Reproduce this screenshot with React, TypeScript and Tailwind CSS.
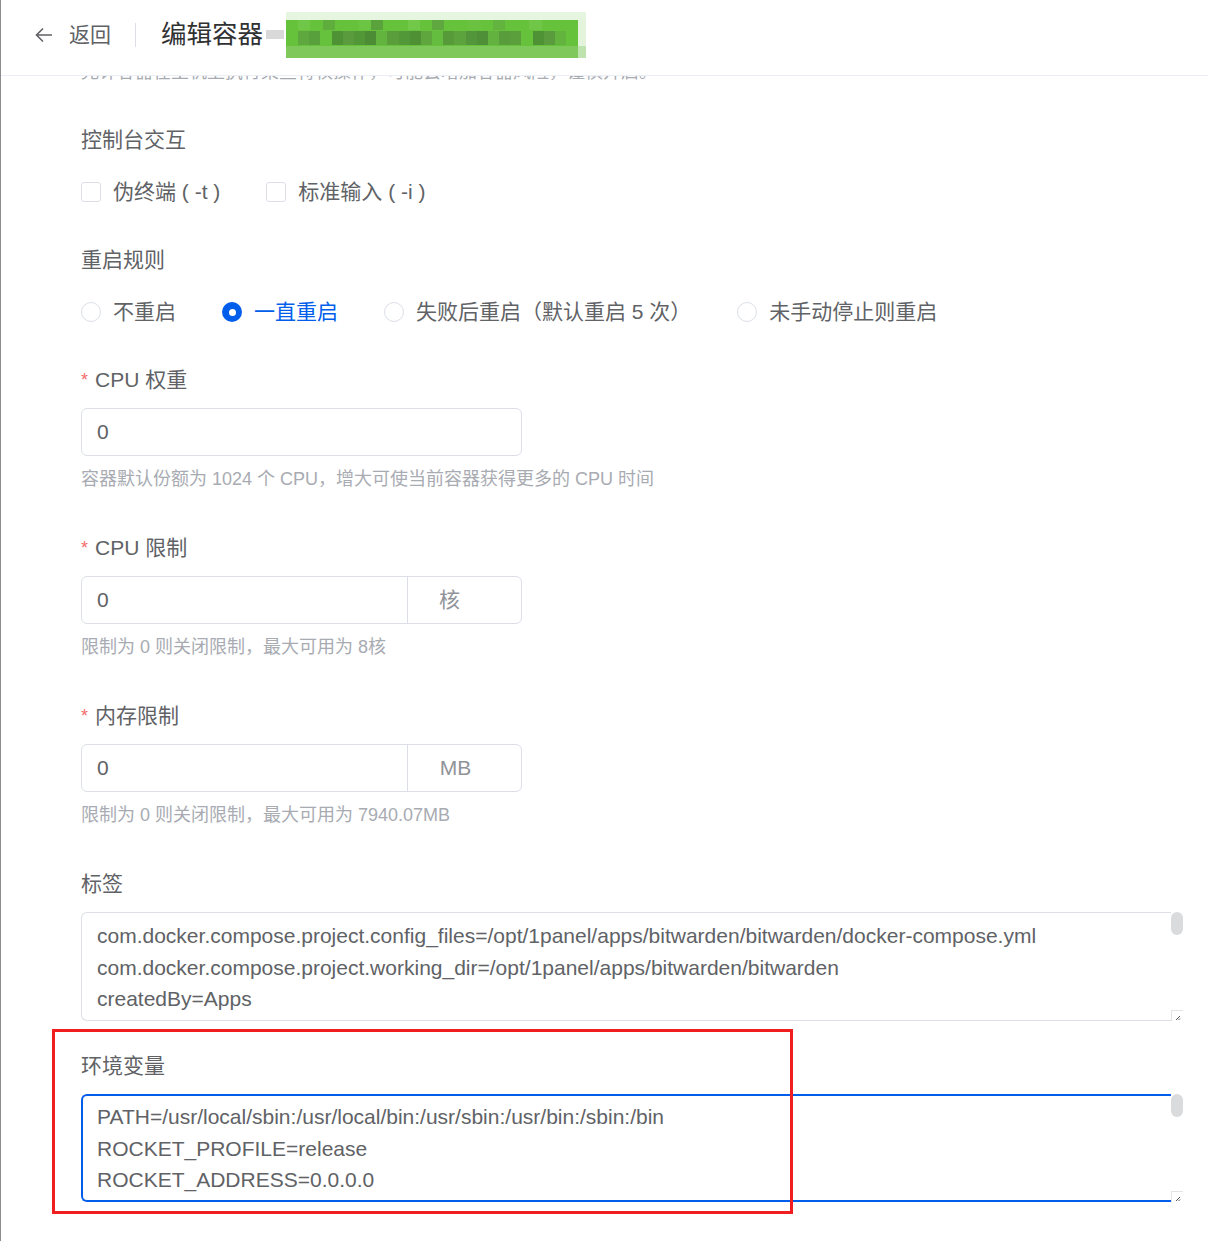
import React from 'react';

const band = [
  '#5ea83f', '#58a03b', '#66c23c', '#4f9236', '#5a9c3d', '#519637', '#4c8c35', '#62b43f',
  '#5a9e3c', '#539838', '#4f9035', '#5fa63e', '#64bd3e', '#569a3a', '#5da33d', '#52953a',
  '#4e8f37', '#63b13f', '#589c3b', '#5b9f3c', '#66c23a', '#4f9236', '#5a9c3d', '#62b43f',
];

const top = [
  '#66c23a', '#70c647', '#66c23a', '#5fae3d', '#66c23a', '#66c23a', '#6cc443', '#5aa33c',
  '#66c23a', '#66c23a', '#71c849', '#66c23a', '#5ea83f', '#66c23a', '#66c23a', '#6bc241',
  '#66c23a', '#62b43f', '#66c23a', '#66c23a', '#70c647', '#66c23a', '#66c23a', '#66c23a',
];

function Blurred() {
  return (
    <div className="ml-[2px] flex h-[46px] w-[300px] flex-col bg-[#e3f3dc]">
      <div className="h-[8px] w-full bg-[#e6f5df]" />
      <div className="flex h-[10px] w-[292px] bg-[#66c23a]">
        {top.map((c, i) => (
          <div key={i} className="h-full flex-1" style={{ backgroundColor: c }} />
        ))}
      </div>
      <div className="flex h-[16px] w-[292px] items-center bg-[#66c23a] px-[12px]">
        {band.map((c, i) => (
          <div key={i} className="h-[14px] flex-1" style={{ backgroundColor: c }} />
        ))}
      </div>
      <div className="flex h-[12px] w-[300px]">
        <div className="h-full w-[292px] bg-[#7fc95c]" />
        <div className="h-full flex-1 bg-[#bfe3ae]" />
      </div>
    </div>
  );
}

function FieldLabel({ text, required, className }: { text: string; required?: boolean; className: string }) {
  return (
    <div className={`flex h-[30px] items-center text-[21px] leading-[30px] text-[#606266] ${className}`}>
      {required && <span className="mr-[7px] text-[18px] text-[#f56c6c]">*</span>}
      {text}
    </div>
  );
}

function Help({ text, className }: { text: string; className: string }) {
  return <div className={`h-[27px] text-[18px] leading-[27px] text-[#a8abb2] ${className}`}>{text}</div>;
}

function Checkbox({ text }: { text: string }) {
  return (
    <div className="mr-[46px] flex items-center">
      <div className="h-[20px] w-[20px] rounded-[3px] border border-[#dcdfe6] bg-white" />
      <span className="ml-[12px] text-[21px] text-[#606266]">{text}</span>
    </div>
  );
}

function Radio({ text, checked }: { text: string; checked?: boolean }) {
  return (
    <div className="mr-[46px] flex items-center">
      {checked ? (
        <div className="flex h-[20px] w-[20px] items-center justify-center rounded-full bg-[#005eeb]">
          <div className="h-[7px] w-[7px] rounded-full bg-white" />
        </div>
      ) : (
        <div className="h-[20px] w-[20px] rounded-full border border-[#dcdfe6] bg-white" />
      )}
      <span className={`ml-[12px] text-[21px] ${checked ? 'text-[#005eeb]' : 'text-[#606266]'}`}>{text}</span>
    </div>
  );
}

function TextBox({ lines, focused, height }: { lines: string[]; focused?: boolean; height: string }) {
  return (
    <div className={`mt-[13px] flex ${height}`}>
      <div
        className={`w-[1090px] rounded-l-[6px] text-[21px] leading-[31.5px] text-[#606266] ${
          focused
            ? 'border-y-2 border-l-2 border-[#005eeb] px-[14px] py-[5px]'
            : 'border-y border-l border-[#dcdfe6] px-[15px] py-[7px]'
        }`}
      >
        {lines.map((l) => (
          <div key={l} className="whitespace-nowrap">{l}</div>
        ))}
      </div>
      <div className="flex w-[12px] flex-col justify-between">
        <div className="h-[23px] w-[12px] rounded-full bg-[#dadbdd]" />
        <div className="flex h-[11px] w-[12px] items-end justify-center border-l border-t border-[#e4e4e4] bg-white">
          <svg width="6" height="6" viewBox="0 0 6 6">
            <path d="M5 1L1 5M5 3.5L3.5 5" stroke="#555" strokeWidth="1" />
          </svg>
        </div>
      </div>
    </div>
  );
}

export default function App() {
  return (
    <div className="relative h-[1241px] w-[1208px] overflow-hidden border-l border-[#8c8c8c] bg-white font-['Liberation_Sans','Noto_Sans_CJK_SC',sans-serif]">
      <div className="flex h-[76px] items-center border-b border-[#ebeef5] pb-[6px]">
        <svg className="ml-[34px]" width="18" height="16" viewBox="0 0 18 16" fill="none">
          <path d="M17 8H1.8M8 1.5L1.5 8L8 14.5" stroke="#606266" strokeWidth="1.6" />
        </svg>
        <span className="ml-[16px] text-[21px] text-[#606266]">返回</span>
        <div className="ml-[24px] h-[24px] w-px bg-[#dcdfe6]" />
        <span className="ml-[25px] text-[25.5px] text-[#303133]">编辑容器</span>
        <div className="ml-[3px] h-[9px] w-[18px] bg-[#d9d9d9]" />
        <Blurred />
      </div>

      <div className="overflow-hidden pl-[80px]">
        <Help className="mt-[-17px]" text="允许容器在主机上执行某些特权操作，可能会增加容器风险，谨慎开启。" />

        <FieldLabel className="mt-[39px]" text="控制台交互" />
        <div className="mt-[13px] flex h-[48px] items-center">
          <Checkbox text="伪终端 ( -t )" />
          <Checkbox text="标准输入 ( -i )" />
        </div>

        <FieldLabel className="mt-[29px]" text="重启规则" />
        <div className="mt-[13px] flex h-[48px] items-center">
          <Radio text="不重启" />
          <Radio text="一直重启" checked />
          <Radio text="失败后重启（默认重启 5 次）" />
          <Radio text="未手动停止则重启" />
        </div>

        <FieldLabel className="mt-[29px]" text="CPU 权重" required />
        <div className="mt-[13px] flex h-[48px] w-[441px] items-center rounded-[6px] border border-[#dcdfe6] px-[15px] text-[21px] text-[#606266]">
          0
        </div>
        <Help className="mt-[10px]" text="容器默认份额为 1024 个 CPU，增大可使当前容器获得更多的 CPU 时间" />

        <FieldLabel className="mt-[40px]" text="CPU 限制" required />
        <div className="mt-[13px] flex h-[48px] w-[441px] rounded-[6px] border border-[#dcdfe6] text-[21px]">
          <div className="flex flex-1 items-center px-[15px] text-[#606266]">0</div>
          <div className="flex w-[114px] items-center justify-center border-l border-[#dcdfe6] pr-[30px] text-[#909399]">核</div>
        </div>
        <Help className="mt-[10px]" text="限制为 0 则关闭限制，最大可用为 8核" />

        <FieldLabel className="mt-[40px]" text="内存限制" required />
        <div className="mt-[13px] flex h-[48px] w-[441px] rounded-[6px] border border-[#dcdfe6] text-[21px]">
          <div className="flex flex-1 items-center px-[15px] text-[#606266]">0</div>
          <div className="flex w-[114px] items-center justify-center border-l border-[#dcdfe6] pr-[18px] text-[#909399]">MB</div>
        </div>
        <Help className="mt-[10px]" text="限制为 0 则关闭限制，最大可用为 7940.07MB" />

        <FieldLabel className="mt-[40px]" text="标签" />
        <TextBox
          height="h-[109px]"
          lines={[
            'com.docker.compose.project.config_files=/opt/1panel/apps/bitwarden/bitwarden/docker-compose.yml',
            'com.docker.compose.project.working_dir=/opt/1panel/apps/bitwarden/bitwarden',
            'createdBy=Apps',
          ]}
        />

        <FieldLabel className="mt-[30px]" text="环境变量" />
        <TextBox
          focused
          height="h-[108px]"
          lines={[
            'PATH=/usr/local/sbin:/usr/local/bin:/usr/sbin:/usr/bin:/sbin:/bin',
            'ROCKET_PROFILE=release',
            'ROCKET_ADDRESS=0.0.0.0',
          ]}
        />
      </div>

      <div className="absolute left-[51px] top-[1029px] h-[185px] w-[741px] border-[3px] border-[#f01e1e]" />
    </div>
  );
}
